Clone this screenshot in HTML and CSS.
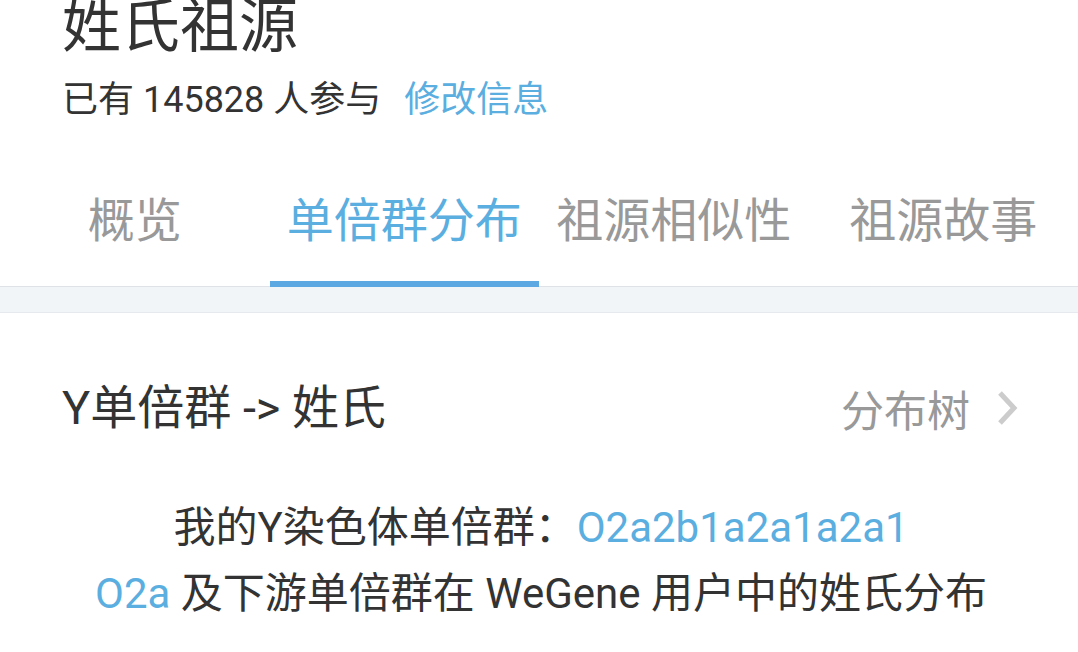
FILE: index.html
```html
<!DOCTYPE html>
<html lang="zh-CN">
<head>
    <meta charset="UTF-8">
    <meta name="viewport" content="width=device-width, initial-scale=1.0">
    <title>姓氏祖源</title>
    <link rel="stylesheet" href="styles.css">
</head>
<body>
    <header class="page-head">
        <h1 class="page-title">姓氏祖源</h1>
        <p class="page-meta">已有 145828 人参与 <a class="link" href="#">修改信息</a></p>
    </header>

    <nav class="tabs">
        <a class="tab" href="#">概览</a>
        <a class="tab active" href="#">单倍群分布</a>
        <a class="tab" href="#">祖源相似性</a>
        <a class="tab" href="#">祖源故事</a>
    </nav>

    <div class="band"></div>

    <main>
        <section class="haplo">
            <div class="haplo-head">
                <h2>Y单倍群 -&gt; 姓氏</h2>
                <a class="tree-link" href="#">分布树
                    <svg class="chevron" viewBox="0 0 24 40" width="24" height="40">
                        <path d="M4 5 L18 20 L4 35" fill="none" stroke="#cccccc" stroke-width="5"/>
                    </svg>
                </a>
            </div>
            <p class="haplo-text">我的Y染色体单倍群：<span class="blue">O2a2b1a2a1a2a1</span></p>
            <p class="haplo-text"><span class="blue">O2a</span> 及下游单倍群在 WeGene 用户中的姓氏分布</p>
        </section>
    </main>
</body>
</html>
```

FILE: styles.css
```css
/* General */
body {
    margin: 0;
    padding: 0;
    background: #fff;
    color: #333;
    font-family: Roboto, "Noto Sans CJK SC", sans-serif;
    overflow: hidden;
}

a {
    text-decoration: none;
}

.blue, .link {
    color: #5aaee0;
}

/* Header */
.page-head {
    padding: 0 0 0 62px;
}

.page-title {
    margin: -5px 0 0;
    font-size: 59px;
    font-weight: normal;
    line-height: 64px;
}

.page-meta {
    margin: 20px 0 0;
    font-size: 36px;
    line-height: 42px;
}

.page-meta .link {
    margin-left: 14px;
}

/* Tabs */
.tabs {
    display: flex;
    margin-top: 72px;
    border-bottom: 1px solid #dfe3e7;
}

.tab {
    flex: 1;
    text-align: center;
    font-size: 47px;
    line-height: 56px;
    color: #999;
    padding: 0 0 32px;
    border-bottom: 6px solid transparent;
    margin-bottom: -1px;
}

.tab.active {
    color: #5aaee0;
    border-bottom-color: #5ba8e2;
}

.band {
    height: 25px;
    background: #f2f5f8;
    border-bottom: 1px solid #e6eaee;
}

/* Haplogroup section */
.haplo {
    padding: 0 58px 0 62px;
}

.haplo-head {
    display: flex;
    justify-content: space-between;
    align-items: center;
    margin-top: 64px;
}

.haplo-head h2 {
    margin: 0;
    font-size: 47px;
    font-weight: normal;
    line-height: 54px;
}

.tree-link {
    display: flex;
    align-items: center;
    gap: 26px;
    font-size: 43px;
    color: #999;
}

.haplo-text {
    margin: 0;
    text-align: center;
    font-size: 42px;
    line-height: 66px;
}

.haplo-head + .haplo-text {
    margin-top: 56px;
}
```
